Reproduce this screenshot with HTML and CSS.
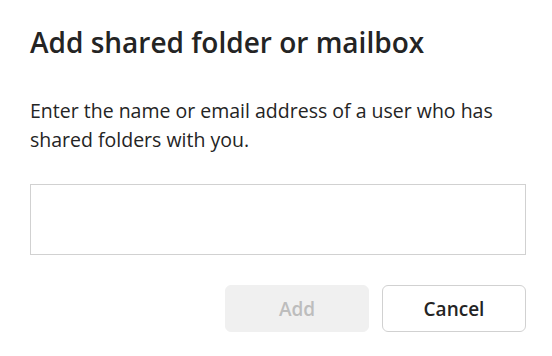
FILE: index.html
```html
<!DOCTYPE html>
<html lang="en">
<head>
<meta charset="utf-8">
<title>Add shared folder or mailbox</title>
<link rel="stylesheet" href="styles.css">
</head>
<body>
<div class="dialog">
  <h1 class="dialog-title">Add shared folder or mailbox</h1>
  <p class="dialog-text">Enter the name or email address of a user who has shared folders with you.</p>
  <input class="dialog-input" type="text" aria-label="Name or email address">
  <div class="dialog-actions">
    <button class="btn btn-disabled" type="button" disabled>Add</button>
    <button class="btn btn-secondary" type="button">Cancel</button>
  </div>
</div>
</body>
</html>
```

FILE: styles.css
```css
html, body {
  margin: 0;
  padding: 0;
  background: #ffffff;
}

body {
  font-family: "Open Sans", "Noto Sans", sans-serif;
  color: #242424;
}

.dialog {
  display: flex;
  flex-direction: column;
  padding: 24px 26px 0 30px;
  width: 552px;
  box-sizing: border-box;
}

.dialog-title {
  margin: 0;
  font-size: 28px;
  font-weight: 600;
  line-height: 36px;
  color: #242424;
}

.dialog-text {
  margin: 36px 0 0 0;
  font-size: 19.5px;
  font-weight: 400;
  line-height: 29px;
  color: #242424;
  max-width: 480px;
}

.dialog-input {
  margin-top: 30px;
  height: 71px;
  box-sizing: border-box;
  border: 1px solid #d1d1d1;
  border-radius: 0;
  outline: none;
  background: #ffffff;
  font-family: inherit;
  font-size: 19px;
  padding: 0 12px;
}

.dialog-actions {
  display: flex;
  justify-content: flex-end;
  gap: 13px;
  margin-top: 30px;
}

.btn {
  width: 144px;
  height: 47px;
  box-sizing: border-box;
  border-radius: 6px;
  font-family: inherit;
  font-size: 19px;
  font-weight: 600;
  padding: 0;
}

.btn-disabled {
  background: #f0f0f0;
  border: 1px solid #f0f0f0;
  color: #bdbdbd;
}

.btn-secondary {
  background: #ffffff;
  border: 1px solid #d1d1d1;
  color: #242424;
}
```
